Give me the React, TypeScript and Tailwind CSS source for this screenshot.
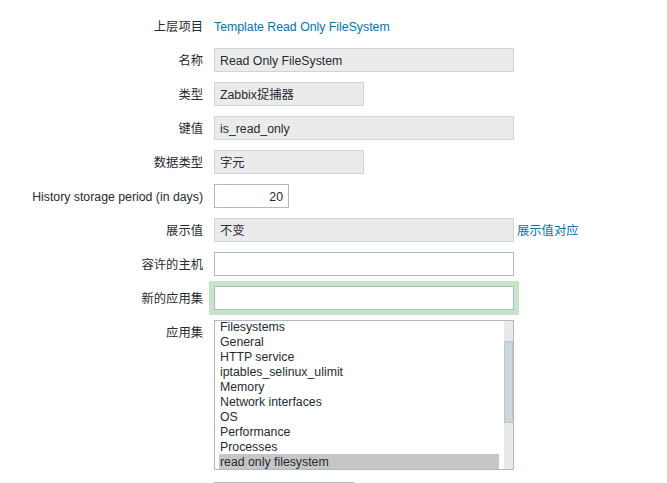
const APPLICATIONS = [
  'Filesystems',
  'General',
  'HTTP service',
  'iptables_selinux_ulimit',
  'Memory',
  'Network interfaces',
  'OS',
  'Performance',
  'Processes',
  'read only filesystem',
  'Security',
  'SSH service',
];

const SELECTED = 'read only filesystem';

function Label({ children }: { children: React.ReactNode }) {
  return <div className="h-[24px] pt-[1px] leading-[24px] text-right whitespace-nowrap">{children}</div>;
}

function ReadOnlyField({ value, width }: { value: string; width: string }) {
  return (
    <div
      className={`${width} h-[24px] flex items-center px-[5px] pt-[2px] bg-[#ebebeb] border border-[#cdd5d9] whitespace-nowrap overflow-hidden`}
    >
      {value}
    </div>
  );
}

function TextField({ value = '', width, focused = false, alignRight = false }: {
  value?: string;
  width: string;
  focused?: boolean;
  alignRight?: boolean;
}) {
  return (
    <div
      className={`${width} h-[24px] flex items-center px-[5px] pt-[2px] bg-white border border-[#acbbc2] ${
        alignRight ? 'justify-end' : ''
      } ${focused ? 'shadow-[0_0_0_5px_#c6e4c9]' : ''}`}
    >
      {value}
    </div>
  );
}

function ApplicationList() {
  return (
    <div className="w-[300px] h-[150px] border border-[#acbbc2] bg-white flex">
      <div className="flex-1 overflow-hidden pl-[4px] pr-[5px]">
        <div className="-mt-[2px]">
          {APPLICATIONS.map((app) => (
            <div
              key={app}
              className={`h-[15px] leading-[15px] pt-[1px] pl-[1px] whitespace-nowrap ${
                app === SELECTED ? 'bg-[#c6c6c6]' : ''
              }`}
            >
              {app}
            </div>
          ))}
        </div>
      </div>
      <div className="w-[9px] bg-[#e9e9e9] flex flex-col">
        <div className="mt-[20px] h-[82px] bg-[#ccd6dc] border border-[#b9c6cd]" />
      </div>
    </div>
  );
}

export default function App() {
  return (
    <div className="min-h-screen bg-white pt-[14px] font-['Liberation_Sans','Noto_Sans_CJK_SC',sans-serif] text-[12.3px] text-[#1f2c33]">
      <div className="grid grid-cols-[203px_1fr] gap-x-[11px] gap-y-[10px] items-start">
        <Label>上层项目</Label>
        <div className="h-[24px] pt-[2px] flex items-center">
          <a className="text-[#0275b8]">Template Read Only FileSystem</a>
        </div>

        <Label>名称</Label>
        <ReadOnlyField value="Read Only FileSystem" width="w-[300px]" />

        <Label>类型</Label>
        <ReadOnlyField value="Zabbix捉捕器" width="w-[150px]" />

        <Label>键值</Label>
        <ReadOnlyField value="is_read_only" width="w-[300px]" />

        <Label>数据类型</Label>
        <ReadOnlyField value="字元" width="w-[150px]" />

        <Label>History storage period (in days)</Label>
        <TextField value="20" width="w-[75px]" alignRight />

        <Label>展示值</Label>
        <div className="flex items-center gap-[3px]">
          <ReadOnlyField value="不变" width="w-[300px]" />
          <a className="pt-[2px] text-[#0275b8] whitespace-nowrap">展示值对应</a>
        </div>

        <Label>容许的主机</Label>
        <TextField width="w-[300px]" />

        <Label>新的应用集</Label>
        <TextField width="w-[300px]" focused />

        <Label>应用集</Label>
        <ApplicationList />

        <div />
        <div className="mt-[2px] w-[140px] h-[24px] border border-[#acbbc2] bg-white" />
      </div>
    </div>
  );
}
